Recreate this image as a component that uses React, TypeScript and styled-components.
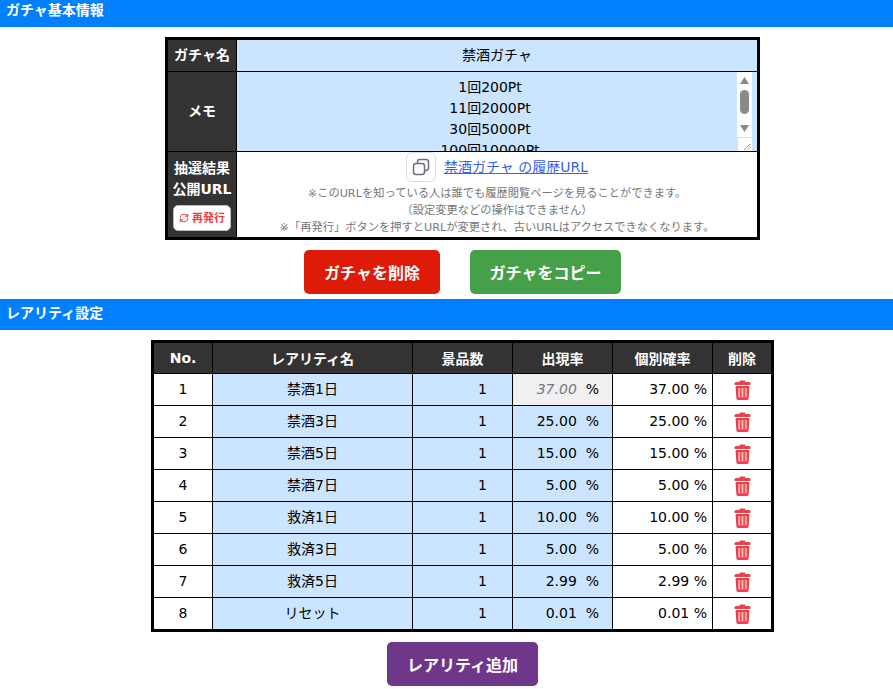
import React from "react";
import styled, { createGlobalStyle } from "styled-components";
import { RefreshCw } from "lucide-react";

const Global = createGlobalStyle`
  html, body { margin: 0; padding: 0; background: #fff; }
  body { font-family: "DejaVu Sans", "Noto Sans CJK JP", sans-serif; font-size: 14px; color: #000; }
`;

const Page = styled.div`
  width: 893px;
  height: 689px;
  overflow: hidden;
  display: flex;
  flex-direction: column;
`;

const SectionBar = styled.h2<{ $h: number; $pt: number }>`
  margin: 0;
  height: ${(p) => p.$h}px;
  background: #007fff;
  color: #fff;
  font: bold 14px/21px "DejaVu Sans", "Noto Sans CJK JP", sans-serif;
  padding: ${(p) => p.$pt}px 0 0 6px;
  box-sizing: border-box;
`;

const InfoTable = styled.table`
  border-collapse: separate;
  border-spacing: 0;
  table-layout: fixed;
  width: 595px;
  margin: 10px auto 0 165px;
  border: 3px solid #000;
  box-sizing: border-box;
`;

const Label = styled.th<{ $h: number; $last?: boolean }>`
  width: 69px;
  height: ${(p) => p.$h}px;
  box-sizing: border-box;
  padding: 0;
  background: #333;
  color: #fff;
  font-size: 14px;
  line-height: 21px;
  font-weight: bold;
  border-right: 1px solid #000;
  border-bottom: ${(p) => (p.$last ? "none" : "1px solid #000")};
`;

const NameCell = styled.td`
  background: #cbe5ff;
  text-align: center;
  padding: 0;
  border-bottom: 1px solid #000;
  line-height: 21px;
`;

const MemoCell = styled.td`
  background: #cbe5ff;
  padding: 0;
  border-bottom: 1px solid #000;
  position: relative;
`;

const Memo = styled.div`
  height: 79px;
  overflow: hidden;
  text-align: center;
  padding: 5px 14px 0 0;
  box-sizing: border-box;
  line-height: 21px;
`;

const FakeScrollbar = styled.svg`
  position: absolute;
  top: 0;
  right: 5px;
  width: 15px;
  height: 79px;
`;

const UrlCell = styled.td`
  background: #fff;
  padding: 0;
  text-align: center;
  vertical-align: top;
`;

const UrlLine = styled.div`
  display: flex;
  justify-content: center;
  align-items: center;
  gap: 8px;
  height: 30px;
`;

const CopyButton = styled.span`
  width: 30px;
  height: 30px;
  box-sizing: border-box;
  border: 1px solid #ddd;
  border-radius: 6px;
  display: flex;
  align-items: center;
  justify-content: center;
`;

const HistoryLink = styled.a`
  color: #3a62e8;
  text-decoration: underline;
  font-size: 14px;
  line-height: 21px;
`;

const Notes = styled.div`
  color: #777;
  font-size: 11.25px;
  line-height: 17px;
  margin-top: 3px;
`;

const ReissueButton = styled.span`
  display: inline-flex;
  align-items: center;
  justify-content: center;
  gap: 3px;
  width: 58px;
  height: 26px;
  box-sizing: border-box;
  margin-top: 5px;
  background: #fff;
  border: 1px solid #bbb;
  border-radius: 5px;
  color: #ee3f46;
  font-size: 11px;
  font-weight: bold;
`;

const ActionRow = styled.div<{ $top: number; $gap: number; $bottom: number }>`
  display: flex;
  justify-content: center;
  gap: ${(p) => p.$gap}px;
  margin-top: ${(p) => p.$top}px;
  margin-bottom: ${(p) => p.$bottom}px;
  padding-left: 32px;
`;

const ActionButton = styled.button<{ $bg: string; $w: number }>`
  width: ${(p) => p.$w}px;
  height: 44px;
  border: none;
  border-radius: 5px;
  background: ${(p) => p.$bg};
  color: #fff;
  font: bold 16px "Noto Sans CJK JP", sans-serif;
  padding: 0;
`;

const RarityTable = styled.table`
  border-collapse: separate;
  border-spacing: 0;
  table-layout: fixed;
  width: 623px;
  margin: 10px 0 0 151px;
  border: 3px solid #000;
  box-sizing: border-box;
`;

const Head = styled.th<{ $w: number; $last?: boolean }>`
  width: ${(p) => p.$w}px;
  height: 31px;
  box-sizing: border-box;
  padding: 0;
  background: #333;
  color: #fff;
  font-size: 14px;
  font-weight: bold;
  border-bottom: 1px solid #000;
  border-right: ${(p) => (p.$last ? "none" : "1px solid #000")};
`;

type Align = "center" | "right";

const Cell = styled.td<{ $blue?: boolean; $align?: Align; $pr?: number; $last?: boolean; $end?: boolean; $gray?: boolean }>`
  height: ${(p) => (p.$end ? 31 : 32)}px;
  box-sizing: border-box;
  padding: 0 ${(p) => p.$pr ?? 0}px 0 0;
  background: ${(p) => (p.$gray ? "#f0f0f0" : p.$blue ? "#cbe5ff" : "#fff")};
  text-align: ${(p) => p.$align ?? "center"};
  border-bottom: ${(p) => (p.$end ? "none" : "1px solid #000")};
  border-right: ${(p) => (p.$last ? "none" : "1px solid #000")};
  line-height: 21px;
  white-space: pre;
`;

const RateInput = styled.span<{ $locked?: boolean }>`
  font-style: ${(p) => (p.$locked ? "italic" : "normal")};
  color: ${(p) => (p.$locked ? "#777" : "#000")};
`;

const TrashSvg = styled.svg`
  width: 17px;
  height: 20px;
  display: block;
  margin: 1px auto 0;
`;

const TrashIcon = () => (
  <TrashSvg viewBox="0 0 17 20">
    <path d="M6 0.5h5l0.6 1.5H15a1.5 1.5 0 0 1 1.5 1.5V5H0.5V3.500A1.5 1.500 0 0 1 2 2h3.400Z" fill="#e8434a" />
    <path d="M1.500 6h14l-0.900 12.500a1.500 1.500 0 0 1-1.500 1.400H3.900a1.500 1.500 0 0 1-1.500-1.400Z" fill="#e8434a" />
    <rect x="4.300" y="8" width="1.800" height="9.500" fill="#f7b9bb" />
    <rect x="7.600" y="8" width="1.800" height="9.500" fill="#f7b9bb" />
    <rect x="10.900" y="8" width="1.800" height="9.500" fill="#f7b9bb" />
  </TrashSvg>
);

const rows = [
  ["1", "禁酒1日", "37.00"],
  ["2", "禁酒3日", "25.00"],
  ["3", "禁酒5日", "15.00"],
  ["4", "禁酒7日", "5.00"],
  ["5", "救済1日", "10.00"],
  ["6", "救済3日", "5.00"],
  ["7", "救済5日", "2.99"],
  ["8", "リセット", "0.01"],
];

export default function App() {
  return (
    <Page>
      <Global />
      <SectionBar $h={27} $pt={0}>ガチャ基本情報</SectionBar>
      <InfoTable>
        <tbody>
          <tr>
            <Label $h={32}>ガチャ名</Label>
            <NameCell>禁酒ガチャ</NameCell>
          </tr>
          <tr>
            <Label $h={80}>メモ</Label>
            <MemoCell>
              <Memo>
                1回200Pt<br />11回2000Pt<br />30回5000Pt<br />100回10000Pt
              </Memo>
              <FakeScrollbar viewBox="0 0 15 79">
                <rect width="15" height="79" fill="#fff" />
                <path d="M3 12L7.500 5L12 12Z" fill="#8a8a8a" />
                <rect x="3" y="18" width="9" height="24" rx="4.500" fill="#8a8a8a" />
                <path d="M3 53L7.500 60L12 53Z" fill="#8a8a8a" />
                <rect x="0.500" y="65.500" width="15" height="14" fill="#fff" stroke="#ddd" />
                <path d="M7 78L13 72M10.500 78L13.500 75" stroke="#777" strokeWidth="0.800" />
              </FakeScrollbar>
            </MemoCell>
          </tr>
          <tr>
            <Label $h={85} $last>
              抽選結果<br />公開URL<br />
              <ReissueButton><RefreshCw size={10} strokeWidth={2.5} />再発行</ReissueButton>
            </Label>
            <UrlCell>
              <UrlLine>
                <CopyButton>
                  <svg width="18" height="18" viewBox="0 0 18 18" fill="none" stroke="#6b7078" strokeWidth="1.500">
                    <rect x="1.500" y="5.500" width="11" height="11" rx="2.500" />
                    <path d="M5.500 5.500V3.800a2.300 2.300 0 0 1 2.300-2.300h6.400a2.300 2.300 0 0 1 2.300 2.300v6.400a2.300 2.300 0 0 1-2.300 2.300h-1.700" />
                  </svg>
                </CopyButton>
                <HistoryLink href="#">禁酒ガチャ の履歴URL</HistoryLink>
              </UrlLine>
              <Notes>
                ※このURLを知っている人は誰でも履歴閲覧ページを見ることができます。<br />
                （設定変更などの操作はできません）<br />
                ※「再発行」ボタンを押すとURLが変更され、古いURLはアクセスできなくなります。
              </Notes>
            </UrlCell>
          </tr>
        </tbody>
      </InfoTable>
      <ActionRow $top={10} $gap={30} $bottom={5}>
        <ActionButton $bg="#dd1b08" $w={136}>ガチャを削除</ActionButton>
        <ActionButton $bg="#46a04a" $w={151}>ガチャをコピー</ActionButton>
      </ActionRow>
      <SectionBar $h={31} $pt={4}>レアリティ設定</SectionBar>
      <RarityTable>
        <thead>
          <tr>
            <Head $w={59}>No.</Head>
            <Head $w={200}>レアリティ名</Head>
            <Head $w={100}>景品数</Head>
            <Head $w={100}>出現率</Head>
            <Head $w={100}>個別確率</Head>
            <Head $w={58} $last>削除</Head>
          </tr>
        </thead>
        <tbody>
          {rows.map(([no, name, rate], i) => {
            const end = i === rows.length - 1;
            return (
              <tr key={no}>
                <Cell $end={end}>{no}</Cell>
                <Cell $end={end} $blue>{name}</Cell>
                <Cell $end={end} $blue $align="right" $pr={25}>1</Cell>
                <Cell $end={end} $blue $gray={i === 0} $align="right" $pr={13}>
                  <RateInput $locked={i === 0}>{rate}</RateInput>{"  %"}
                </Cell>
                <Cell $end={end} $align="right" $pr={5}>{rate} %</Cell>
                <Cell $end={end} $last><TrashIcon /></Cell>
              </tr>
            );
          })}
        </tbody>
      </RarityTable>
      <ActionRow $top={10} $gap={0} $bottom={0}>
        <ActionButton $bg="#6f3789" $w={151}>レアリティ追加</ActionButton>
      </ActionRow>
    </Page>
  );
}
